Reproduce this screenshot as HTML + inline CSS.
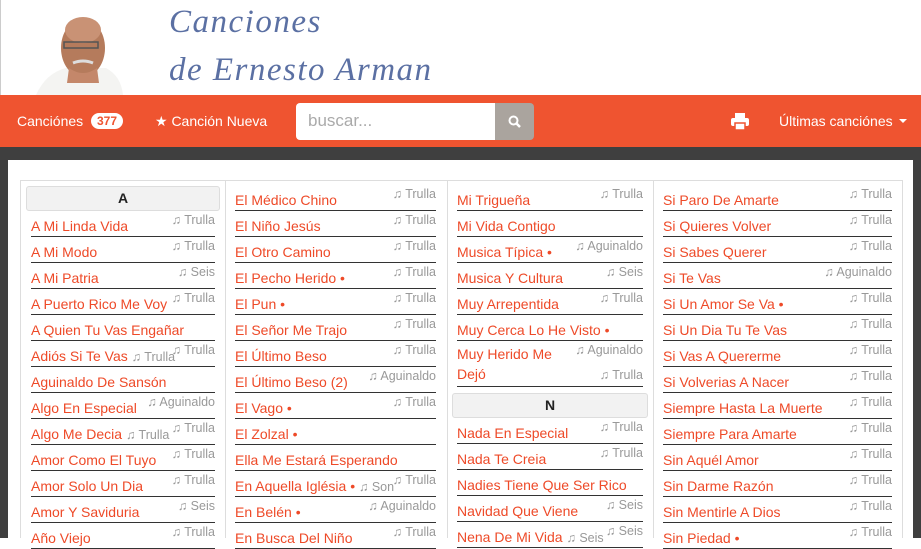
<!DOCTYPE html>
<html><head><meta charset="utf-8"><style>
*{margin:0;padding:0;box-sizing:border-box}
body{width:921px;height:538px;overflow:hidden;background:#fff;font-family:"Liberation Sans","DejaVu Sans",sans-serif;position:relative}
.hdr{position:absolute;left:0;top:0;width:921px;height:95px;background:#fff;border-left:1px solid #ccc}
.t1,.t2{position:absolute;font-family:"Liberation Serif",serif;font-style:italic;color:#5b70a3;font-size:33px;letter-spacing:1.5px}
.t1{left:168px;top:4px}.t2{left:168px;top:52px}
.nav{position:absolute;left:0;top:95px;width:921px;height:52px;background:#ef5430;color:#fff;font-size:14px}
.nav span{position:absolute}
.badge{background:#fff;color:#ef5430;border-radius:9px;font-weight:bold;font-size:12px;padding:1px 6px;top:18px}
.search{position:absolute;left:296px;top:8px;width:200px;height:37px;background:#fff;border-radius:4px 0 0 4px;color:#aaa;font-size:17px;padding:8px 12px}
.sbtn{position:absolute;left:495px;top:8px;width:39px;height:37px;background:#aaa49e;border-radius:0 4px 4px 0}
.dark{position:absolute;left:0;top:147px;width:921px;height:391px;background:#3f3f3f}
.panel{position:absolute;left:8px;top:160px;width:905px;height:378px;background:#fff}
.box{position:absolute;left:20px;top:180px;width:883px;height:358px;border:1px solid #ddd;border-bottom:none}
.sep{position:absolute;top:181px;width:1px;height:357px;background:#ddd}
.col{position:absolute}
.r{position:relative;height:26px;border-bottom:1px solid #333}
.r b{position:absolute;left:0;bottom:2px;font-weight:normal;color:#ee4a28;font-size:14px;white-space:nowrap}
.r i{position:absolute;right:0;top:2px;font-style:normal;color:#999;font-size:12.5px;white-space:nowrap}
.r em{font-style:normal;color:#999;font-size:12.5px}
.h{height:25px;background:#f2f2f2;border:1px solid #ddd;border-radius:3px;text-align:center;font-weight:bold;font-size:14px;line-height:23px;color:#222}
</style></head><body>
<div class="hdr">
<svg style="position:absolute;left:30px;top:8px" width="95" height="87" viewBox="0 0 95 87">
<path d="M5 87 Q15 65 35 60 L75 60 Q90 68 92 87Z" fill="#f4f4f2"/>
<ellipse cx="52" cy="40" rx="22" ry="29" fill="#b57b5c"/>
<ellipse cx="52" cy="22" rx="18" ry="13" fill="#c99275"/>
<path d="M38 60 Q52 70 66 60 L68 75 L36 75Z" fill="#c4876a"/>
<rect x="33" y="34" width="34" height="6" fill="none" stroke="#555" stroke-width="1.5"/>
<path d="M42 55 Q52 51 62 55" stroke="#ddd" stroke-width="3" fill="none"/>
</svg>
<div class="t1">Canciones</div>
<div class="t2">de Ernesto Arman</div>
</div>
<div class="nav">
<span style="left:17px;top:18px">Canciónes</span>
<span class="badge" style="left:91px">377</span>
<span style="left:155px;top:18px">★ Canción Nueva</span>
<div class="search">buscar...</div>
<div class="sbtn"><svg style="position:absolute;left:13px;top:12px" width="14" height="14" viewBox="0 0 14 14"><circle cx="5.5" cy="5.5" r="4" fill="none" stroke="#fff" stroke-width="2"/><path d="M8.5 8.5L12 12" stroke="#fff" stroke-width="2.5"/></svg></div>
<svg style="position:absolute;left:731px;top:18px" width="18" height="17" viewBox="0 0 18 17"><rect x="4" y="0" width="10" height="5" fill="#fff"/><rect x="0" y="5" width="18" height="8" rx="2" fill="#fff"/><rect x="4" y="10" width="10" height="7" fill="#fff" stroke="#ef5430" stroke-width="1.5"/></svg>
<span style="left:779px;top:18px">Últimas canciónes <span style="position:relative;display:inline-block;width:0;height:0;border-left:4px solid transparent;border-right:4px solid transparent;border-top:4px solid #fff;top:-3px;margin-left:2px"></span></span>
</div>
<div class="dark"></div>
<div class="panel"></div>
<div class="box"></div>
<div class="sep" style="left:225px"></div>
<div class="sep" style="left:447px"></div>
<div class="sep" style="left:653px"></div>

<div class="col" style="left:26px;top:186px;width:194px"><div class="h">A</div></div>
<div class="col" style="left:31px;top:211px;width:184px">
<div class="r"><b>A Mi Linda Vida</b><i>♫ Trulla</i></div>
<div class="r"><b>A Mi Modo</b><i>♫ Trulla</i></div>
<div class="r"><b>A Mi Patria</b><i>♫ Seis</i></div>
<div class="r"><b>A Puerto Rico Me Voy</b><i>♫ Trulla</i></div>
<div class="r"><b>A Quien Tu Vas Engañar</b></div>
<div class="r"><b>Adiós Si Te Vas <em>♫ Trulla</em></b><i>♫ Trulla</i></div>
<div class="r"><b>Aguinaldo De Sansón</b></div>
<div class="r"><b>Algo En Especial</b><i>♫ Aguinaldo</i></div>
<div class="r"><b>Algo Me Decia <em>♫ Trulla</em></b><i>♫ Trulla</i></div>
<div class="r"><b>Amor Como El Tuyo</b><i>♫ Trulla</i></div>
<div class="r"><b>Amor Solo Un Dia</b><i>♫ Trulla</i></div>
<div class="r"><b>Amor Y Saviduria</b><i>♫ Seis</i></div>
<div class="r"><b>Año Viejo</b><i>♫ Trulla</i></div>
</div>

<div class="col" style="left:235px;top:185px;width:201px">
<div class="r"><b>El Médico Chino</b><i>♫ Trulla</i></div>
<div class="r"><b>El Niño Jesús</b><i>♫ Trulla</i></div>
<div class="r"><b>El Otro Camino</b><i>♫ Trulla</i></div>
<div class="r"><b>El Pecho Herido •</b><i>♫ Trulla</i></div>
<div class="r"><b>El Pun •</b><i>♫ Trulla</i></div>
<div class="r"><b>El Señor Me Trajo</b><i>♫ Trulla</i></div>
<div class="r"><b>El Último Beso</b><i>♫ Trulla</i></div>
<div class="r"><b>El Último Beso (2)</b><i>♫ Aguinaldo</i></div>
<div class="r"><b>El Vago •</b><i>♫ Trulla</i></div>
<div class="r"><b>El Zolzal •</b></div>
<div class="r"><b>Ella Me Estará Esperando</b></div>
<div class="r"><b>En Aquella Iglésia • <em>♫ Son</em></b><i>♫ Trulla</i></div>
<div class="r"><b>En Belén •</b><i>♫ Aguinaldo</i></div>
<div class="r"><b>En Busca Del Niño</b><i>♫ Trulla</i></div>
</div>

<div class="col" style="left:457px;top:185px;width:186px">
<div class="r"><b>Mi Trigueña</b><i>♫ Trulla</i></div>
<div class="r"><b>Mi Vida Contigo</b></div>
<div class="r"><b>Musica Típica •</b><i>♫ Aguinaldo</i></div>
<div class="r"><b>Musica Y Cultura</b><i>♫ Seis</i></div>
<div class="r"><b>Muy Arrepentida</b><i>♫ Trulla</i></div>
<div class="r"><b>Muy Cerca Lo He Visto •</b></div>
<div class="r" style="height:46px"><b style="line-height:20px">Muy Herido Me<br>Dejó</b><i>♫ Aguinaldo</i><i style="top:27px">♫ Trulla</i></div>
</div>
<div class="col" style="left:452px;top:393px;width:196px"><div class="h">N</div></div>
<div class="col" style="left:457px;top:418px;width:186px">
<div class="r"><b>Nada En Especial</b><i>♫ Trulla</i></div>
<div class="r"><b>Nada Te Creia</b><i>♫ Trulla</i></div>
<div class="r"><b>Nadies Tiene Que Ser Rico</b></div>
<div class="r"><b>Navidad Que Viene</b><i>♫ Seis</i></div>
<div class="r"><b>Nena De Mi Vida <em>♫ Seis</em></b><i>♫ Seis</i></div>
</div>

<div class="col" style="left:663px;top:185px;width:229px">
<div class="r"><b>Si Paro De Amarte</b><i>♫ Trulla</i></div>
<div class="r"><b>Si Quieres Volver</b><i>♫ Trulla</i></div>
<div class="r"><b>Si Sabes Querer</b><i>♫ Trulla</i></div>
<div class="r"><b>Si Te Vas</b><i>♫ Aguinaldo</i></div>
<div class="r"><b>Si Un Amor Se Va •</b><i>♫ Trulla</i></div>
<div class="r"><b>Si Un Dia Tu Te Vas</b><i>♫ Trulla</i></div>
<div class="r"><b>Si Vas A Quererme</b><i>♫ Trulla</i></div>
<div class="r"><b>Si Volverias A Nacer</b><i>♫ Trulla</i></div>
<div class="r"><b>Siempre Hasta La Muerte</b><i>♫ Trulla</i></div>
<div class="r"><b>Siempre Para Amarte</b><i>♫ Trulla</i></div>
<div class="r"><b>Sin Aquél Amor</b><i>♫ Trulla</i></div>
<div class="r"><b>Sin Darme Razón</b><i>♫ Trulla</i></div>
<div class="r"><b>Sin Mentirle A Dios</b><i>♫ Trulla</i></div>
<div class="r"><b>Sin Piedad •</b><i>♫ Trulla</i></div>
</div>
</body></html>
